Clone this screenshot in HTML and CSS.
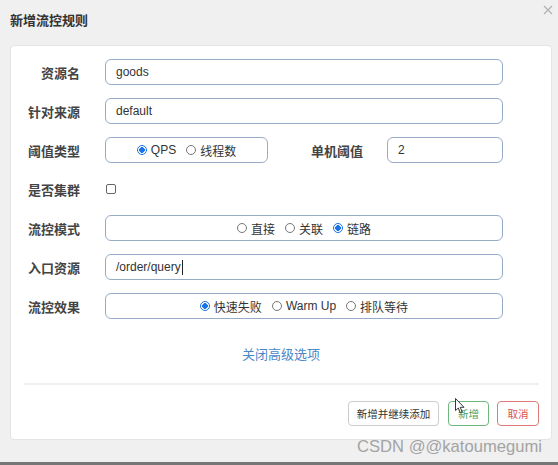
FILE: index.html
```html
<!DOCTYPE html>
<html lang="zh">
<head>
<meta charset="utf-8">
<title>新增流控规则</title>
<link rel="stylesheet" href="styles.css">
</head>
<body>
<div class="dialog">
  <div class="header">
    <span class="title">新增流控规则</span>
    <svg class="close" width="10" height="10" viewBox="0 0 10 10"><path d="M1 1L9 9M9 1L1 9" stroke="#b4b4b4" stroke-width="1.4" fill="none"/></svg>
  </div>
  <div class="card">
    <div class="form">
      <div class="row">
        <label class="label">资源名</label>
        <div class="field input">goods</div>
      </div>
      <div class="row">
        <label class="label">针对来源</label>
        <div class="field input">default</div>
      </div>
      <div class="row">
        <label class="label">阈值类型</label>
        <div class="field radios short">
          <span class="radio checked"></span><span class="opt">QPS</span>
          <span class="radio"></span><span class="opt">线程数</span>
        </div>
        <label class="label label2">单机阈值</label>
        <div class="field input small">2</div>
      </div>
      <div class="row">
        <label class="label">是否集群</label>
        <span class="checkbox"></span>
      </div>
      <div class="row">
        <label class="label">流控模式</label>
        <div class="field radios">
          <span class="radio"></span><span class="opt">直接</span>
          <span class="radio"></span><span class="opt">关联</span>
          <span class="radio checked"></span><span class="opt">链路</span>
        </div>
      </div>
      <div class="row">
        <label class="label">入口资源</label>
        <div class="field input">/order/query<span class="caret"></span></div>
      </div>
      <div class="row">
        <label class="label">流控效果</label>
        <div class="field radios">
          <span class="radio checked"></span><span class="opt">快速失败</span>
          <span class="radio"></span><span class="opt">Warm Up</span>
          <span class="radio"></span><span class="opt">排队等待</span>
        </div>
      </div>
    </div>
    <div class="advanced"><a class="link">关闭高级选项</a></div>
    <div class="divider"></div>
    <div class="footer">
      <button class="btn btn-default">新增并继续添加</button>
      <button class="btn btn-success">新增</button>
      <button class="btn btn-danger">取消</button>
    </div>
  </div>
  <div class="watermark">CSDN @@katoumegumi</div>
  <svg class="pointer" width="10" height="16" viewBox="0 0 10 16"><path d="M0.5 0.5L0.5 12.5L3.3 10L5.3 14.8L7.2 14L5.2 9.3L9 9.3Z" fill="#fff" stroke="#222" stroke-width="0.9" stroke-linejoin="round"/></svg>
</div>
<div class="bottom-bar"></div>
</body>
</html>
```
FILE: styles.css
```css
html, body {
  margin: 0;
  padding: 0;
}
body {
  background: #f0f0f0;
  font-family: "Liberation Sans", "Noto Sans CJK SC", sans-serif;
  color: #333;
  width: 558px;
  height: 465px;
  overflow: hidden;
}
.dialog {
  position: relative;
  height: 462px;
}
.header {
  height: 45px;
  display: flex;
  align-items: center;
  padding-left: 10px;
  box-sizing: border-box;
  padding-bottom: 7px;
}
.title {
  font-size: 13px;
  font-weight: bold;
  color: #333;
}
.close {
  position: absolute;
  right: 5px;
  top: 5px;
}
.card {
  margin: 0 6px 0 10px;
  background: #fff;
  border: 1px solid #e4e4e4;
  border-radius: 4px;
  height: 395px;
  box-sizing: border-box;
  padding-top: 13px;
}
.form {
  display: flex;
  flex-direction: column;
  gap: 13px;
}
.row {
  display: flex;
  align-items: center;
  height: 26px;
  padding-left: 13px;
}
.label {
  width: 56px;
  text-align: right;
  font-size: 13px;
  font-weight: bold;
  color: #444;
  margin-right: 25px;
  flex: none;
}
.label2 {
  width: 95px;
  margin-right: 24px;
}
.field {
  height: 26px;
  box-sizing: border-box;
  border: 1px solid #96abc6;
  border-radius: 6px;
  font-size: 12px;
  color: #333;
  display: flex;
  align-items: center;
}
.input {
  width: 398px;
  padding-left: 10px;
}
.input.small {
  width: 116px;
}
.radios {
  width: 398px;
  justify-content: center;
}
.radios.short {
  width: 163px;
}
.radio {
  width: 10px;
  height: 10px;
  box-sizing: border-box;
  border: 1px solid #767676;
  border-radius: 50%;
  margin-right: 4px;
  flex: none;
}
.radio.checked {
  border: 1px solid #1a73e8;
  background: radial-gradient(circle, #1a73e8 0 2.6px, #fff 3px);
}
.opt {
  margin-right: 10px;
}
.opt:last-child {
  margin-right: 0;
}
.checkbox {
  width: 10px;
  height: 10px;
  box-sizing: border-box;
  border: 1px solid #666;
  border-radius: 2px;
  margin-left: 1px;
}
.caret {
  display: inline-block;
  width: 1px;
  height: 15px;
  background: #222;
  margin-left: 1px;
}
.advanced {
  display: flex;
  justify-content: center;
  margin-top: 24px;
  height: 20px;
  align-items: center;
}
.link {
  color: #4a86c8;
  font-size: 13px;
}
.divider {
  height: 2px;
  background: #efefef;
  margin: 20px 12px 0 13px;
}
.footer {
  display: flex;
  justify-content: flex-end;
  gap: 8px;
  padding: 16px 12px 0 0;
}
.btn {
  height: 25px;
  box-sizing: border-box;
  background: #fff;
  border-radius: 4px;
  font-family: "Liberation Sans", "Noto Sans CJK SC", sans-serif;
  font-size: 10.5px;
  padding: 0;
  white-space: nowrap;
  border: 1px solid #ccc;
  color: #333;
  text-align: center;
}
.btn-default {
  width: 91px;
  margin-right: 1px;
}
.btn-success {
  width: 41px;
  border-color: #6cb97b;
  color: #4a9d5a;
}
.btn-danger {
  width: 42px;
  border-color: #dc7b78;
  color: #d9534f;
}
.watermark {
  position: absolute;
  left: 357px;
  top: 437px;
  font-size: 16.6px;
  color: #a3a3a3;
  font-family: "Liberation Sans", sans-serif;
}
.pointer {
  position: absolute;
  left: 455px;
  top: 398px;
}
.bottom-bar {
  height: 3px;
  background: #767676;
}
```
